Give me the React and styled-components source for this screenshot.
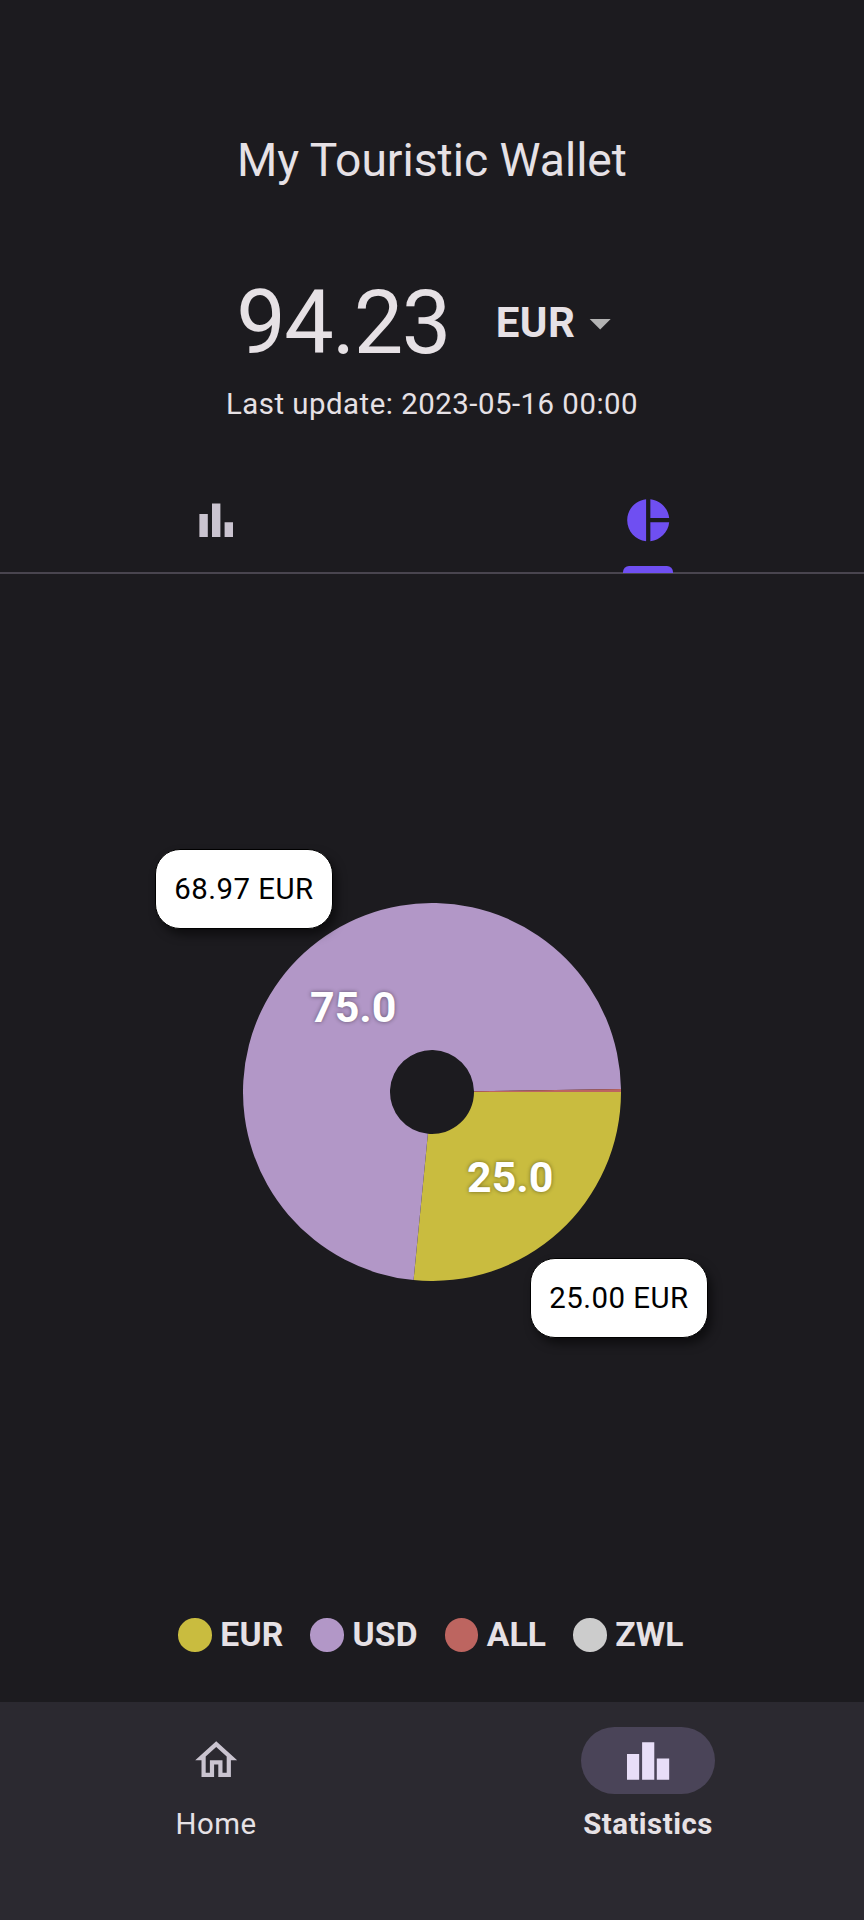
import styled, { createGlobalStyle } from 'styled-components';

const GlobalStyle = createGlobalStyle`
    html, body {
        margin: 0;
        padding: 0;
        background: #1c1b1f;
    }
    * {
        box-sizing: border-box;
    }
`

const Page = styled.div`
    width: 864px;
    height: 1920px;
    display: flex;
    flex-direction: column;
    overflow: hidden;
    background: #1c1b1f;
    color: #e6e1e5;
    font-family: Roboto, "Liberation Sans", sans-serif;
`

const Title = styled.div`
    margin-top: 133px;
    height: 54px;
    line-height: 54px;
    font-size: 46.2px;
    text-align: center;
`

const BalanceRow = styled.div`
    margin-top: 90px;
    height: 92px;
    padding-right: 2px;
    display: flex;
    align-items: center;
    justify-content: center;
`

const Amount = styled.div`
    font-size: 88.2px;
    line-height: 92px;
    font-weight: 400;
    letter-spacing: -1.6px;
`

const CurrencySelect = styled.div`
    margin-left: 46px;
    display: flex;
    align-items: center;
    font-size: 42px;
    font-weight: 700;
    letter-spacing: 0.5px;
`

const Caret = styled.svg`
    width: 50.4px;
    height: 50.4px;
    fill: #b3b3b3;
`

const Updated = styled.div`
    margin-top: 18px;
    line-height: 34px;
    font-size: 29.4px;
    letter-spacing: 0.5px;
    text-align: center;
`

const Tabs = styled.div`
    margin-top: 63px;
    height: 90px;
    display: flex;
    border-bottom: 2px solid #49454f;
`

const Tab = styled.div`
    flex: 1;
    position: relative;
    display: flex;
    justify-content: center;
    padding-top: 11px;
    color: ${(p) => (p.$active ? '#6f4ff2' : '#cac4d0')};
`

const TabIcon = styled.svg`
    width: 50.4px;
    height: 50.4px;
    fill: currentColor;
`

const TabIndicator = styled.div`
    position: absolute;
    bottom: -1px;
    left: 50%;
    width: 50.4px;
    height: 7px;
    margin-left: -25.2px;
    border-radius: 6px 6px 0 0;
    background: #6f4ff2;
`

const ChartArea = styled.div`
    flex: 1;
    display: flex;
    justify-content: center;
    align-items: flex-start;
    padding-top: 329px;
`

const Chart = styled.div`
    position: relative;
    width: 378px;
    height: 378px;
`

const PieSvg = styled.svg`
    display: block;
    width: 378px;
    height: 378px;
`

const SliceLabel = styled.div`
    position: absolute;
    left: ${(p) => p.$x}px;
    top: ${(p) => p.$y}px;
    font-size: 43px;
    line-height: 50px;
    font-weight: 700;
    color: #ffffff;
    text-shadow: 0 0 4px rgba(0, 0, 0, 0.45);
`

const ValueBadge = styled.div`
    position: absolute;
    left: ${(p) => p.$x}px;
    top: ${(p) => p.$y}px;
    width: 178px;
    height: 80px;
    display: flex;
    align-items: center;
    justify-content: center;
    border-radius: 25px;
    background: #ffffff;
    color: #000000;
    font-size: 29.4px;
    letter-spacing: 0.5px;
    border: 1.5px solid #000000;
    box-shadow: 4px 6px 10px rgba(0, 0, 0, 0.5);
`

const Legend = styled.div`
    height: 84px;
    padding-right: 2px;
    display: flex;
    justify-content: center;
    align-items: flex-start;
    gap: 27px;
`

const LegendItem = styled.div`
    display: flex;
    align-items: center;
    gap: 8.4px;
    font-size: 33.6px;
    line-height: 34px;
    font-weight: 700;
    letter-spacing: 0.2px;
`

const LegendDot = styled.span`
    width: 33.6px;
    height: 33.6px;
    border-radius: 50%;
    background: ${(p) => p.$color};
`

const NavBar = styled.div`
    height: 218px;
    display: flex;
    background: #2b2930;
`

const NavItem = styled.div`
    flex: 1;
    display: flex;
    flex-direction: column;
    align-items: center;
    padding-top: 25px;
`

const NavPill = styled.div`
    width: 134.4px;
    height: 67.2px;
    display: flex;
    align-items: center;
    justify-content: center;
    border-radius: 34px;
    background: ${(p) => (p.$active ? '#4a4458' : 'transparent')};
    color: ${(p) => (p.$active ? '#e8def8' : '#cac4d0')};
`

const NavIcon = styled.svg`
    width: 50.4px;
    height: 50.4px;
    fill: currentColor;
`

const NavLabel = styled.div`
    margin-top: 13px;
    line-height: 34px;
    font-size: 29.4px;
    letter-spacing: 0.5px;
    font-weight: ${(p) => (p.$active ? 700 : 400)};
`

const BAR_PATH = 'M4 9h4v11H4zm12 4h4v7h-4zm-6-9h4v16h-4z'
const WIDE_BAR_PATH = 'M1.9 9.1h5.8v12.2H1.9zM9.1 3.4h5.8v17.9H9.1zM16.1 11.2H22v10.1h-5.9z'
const PIE_PATH = 'M11 2v20c-5.07-.5-9-4.79-9-10s3.93-9.5 9-10zm2.03 0v8.99H22c-.47-4.74-4.24-8.52-8.97-8.99zm0 11.01V22c4.74-.47 8.5-4.25 8.97-8.99h-8.97z'
const HOME_PATH = 'M12 5.69l5 4.5V18h-2v-6H9v6H7v-7.81l5-4.5M12 3L2 12h3v8h6v-6h2v6h6v-8h3L12 3z'

const slices = [
    { color: '#c9bc3f', from: 0, to: 95.6 },
    { color: '#b297c7', from: 95.6, to: 359.1 },
    { color: '#bd6560', from: 359.1, to: 360 },
]

const legend = [
    { name: 'EUR', color: '#c9bc3f' },
    { name: 'USD', color: '#b297c7' },
    { name: 'ALL', color: '#bd6560' },
    { name: 'ZWL', color: '#cccccc' },
]

const slicePath = (from, to) => {
    const c = 189
    const pt = (r, deg) => {
        const a = (deg * Math.PI) / 180
        return `${c + r * Math.cos(a)} ${c + r * Math.sin(a)}`
    }
    const large = to - from > 180 ? 1 : 0
    return `M${pt(189, from)} A189 189 0 ${large} 1 ${pt(189, to)} L${pt(42, to)} A42 42 0 ${large} 0 ${pt(42, from)} Z`
}

export default function App() {
    return (
        <Page>
            <GlobalStyle />
            <Title>My Touristic Wallet</Title>
            <BalanceRow>
                <Amount>94.23</Amount>
                <CurrencySelect>
                    EUR
                    <Caret viewBox="0 0 24 24"><path d="M7 10l5 5 5-5z" /></Caret>
                </CurrencySelect>
            </BalanceRow>
            <Updated>Last update: 2023-05-16 00:00</Updated>
            <Tabs>
                <Tab>
                    <TabIcon viewBox="0 0 24 24"><path d={BAR_PATH} /></TabIcon>
                </Tab>
                <Tab $active>
                    <TabIcon viewBox="0 0 24 24"><path d={PIE_PATH} /></TabIcon>
                    <TabIndicator />
                </Tab>
            </Tabs>
            <ChartArea>
                <Chart>
                    <PieSvg viewBox="0 0 378 378">
                        {slices.map((s) => (
                            <path key={s.color} d={slicePath(s.from, s.to)} fill={s.color} />
                        ))}
                    </PieSvg>
                    <SliceLabel $x={67} $y={79}>75.0</SliceLabel>
                    <SliceLabel $x={224} $y={249}>25.0</SliceLabel>
                    <ValueBadge $x={-88} $y={-54}>68.97 EUR</ValueBadge>
                    <ValueBadge $x={287} $y={355}>25.00 EUR</ValueBadge>
                </Chart>
            </ChartArea>
            <Legend>
                {legend.map((item) => (
                    <LegendItem key={item.name}>
                        <LegendDot $color={item.color} />
                        {item.name}
                    </LegendItem>
                ))}
            </Legend>
            <NavBar>
                <NavItem>
                    <NavPill>
                        <NavIcon viewBox="0 0 24 24"><path d={HOME_PATH} /></NavIcon>
                    </NavPill>
                    <NavLabel>Home</NavLabel>
                </NavItem>
                <NavItem>
                    <NavPill $active>
                        <NavIcon viewBox="0 0 24 24"><path d={WIDE_BAR_PATH} /></NavIcon>
                    </NavPill>
                    <NavLabel $active>Statistics</NavLabel>
                </NavItem>
            </NavBar>
        </Page>
    )
}
